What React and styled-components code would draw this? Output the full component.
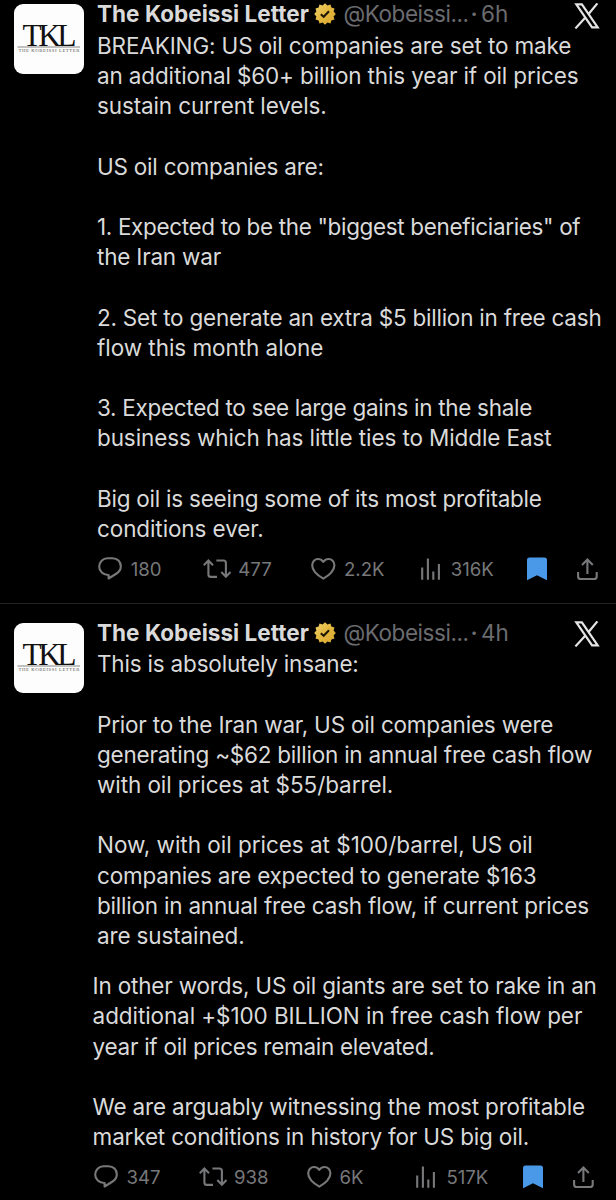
import React from 'react';
import styled, { createGlobalStyle } from 'styled-components';

const GlobalStyle = createGlobalStyle`
  * {
    box-sizing: border-box;
  }

  body {
    margin: 0;
    background: #000;
    overflow: hidden;
  }
`;

const Feed = styled.main`
  width: 616px;
  height: 1200px;
  overflow: hidden;
  background: #000;
  color: #dadada;
  font-family: Inter, 'Liberation Sans', sans-serif;
`;

const Post = styled.article`
  display: flex;
  height: ${({ $height }) => $height}px;
  padding-top: ${({ $top }) => $top}px;
  border-top: ${({ $divided }) => ($divided ? '1px solid #242424' : 'none')};
`;

const AvatarColumn = styled.div`
  flex: 0 0 97px;
  padding: 4px 0 0 14px;
`;

const Avatar = styled.div`
  width: 70px;
  height: 70px;
  border-radius: 9px;
  background: #fdfdfd;
  overflow: hidden;

  svg {
    display: block;
  }
`;

const Content = styled.div`
  flex: 1;
  min-width: 0;
`;

const Header = styled.header`
  display: flex;
  align-items: flex-start;
  height: 30.8px;
  line-height: 28px;
  font-size: 22.5px;
  white-space: nowrap;
`;

const Name = styled.span`
  flex: none;
  width: 217px;
  font-weight: 700;
  letter-spacing: 0.03px;
`;

const Handle = styled.span`
  flex: none;
  width: 134.5px;
  padding-left: 7.5px;
  color: #6b6c6f;
  letter-spacing: -0.45px;
`;

const Dot = styled.span`
  flex: none;
  width: 10.5px;
  color: #6b6c6f;
  font-weight: 600;
`;

const Time = styled.span`
  flex: none;
  width: 92.5px;
  color: #6b6c6f;
`;

const BadgeIcon = styled.svg`
  flex: none;
  width: 22px;
  height: 22px;
  margin-top: 3px;
`;

const LogoIcon = styled.svg`
  flex: none;
  width: 26px;
  height: 26px;
  margin-top: 2.5px;
`;

const Body = styled.div`
  display: flex;
  flex-direction: column;
  gap: 30.2px;
  font-size: 22.5px;
  line-height: 30.2px;
`;

const Continuation = styled.div`
  margin-left: -4.4px;
  padding-top: ${({ $gap = 0 }) => $gap}px;
`;

const Paragraph = styled.p`
  margin: 0;
`;

const Line = styled.span`
  display: block;
  white-space: pre;
  letter-spacing: ${({ $tracking }) => $tracking}px;
`;

const Actions = styled.footer`
  display: grid;
  grid-template-columns: 105px 108.2px 109.3px 106.4px 50.3px 22px;
  align-items: center;
  height: 24px;
  margin: 12.6px 0 0 1.3px;
`;

const Action = styled.div`
  display: flex;
  align-items: center;
  gap: ${({ $gap = 0 }) => $gap}px;
  color: #77787a;
  font-size: 18.6px;
  line-height: 24px;

  svg {
    flex: none;
    fill: none;
    stroke: currentColor;
    stroke-width: 2.1;
  }
`;

function Logo() {
  return (
    <svg width="70" height="70" viewBox="0 0 70 70">
      <g fill="#111" fontFamily="'Liberation Serif', serif">
        <text x="8.6" y="41.6" fontSize="31.5" textLength="54" lengthAdjust="spacing">TKL</text>
        <text x="4.5" y="48.3" fontSize="4.8" fill="#555" textLength="61" lengthAdjust="spacing">
          THE KOBEISSI LETTER
        </text>
      </g>
      <path d="M3.5 43H66" stroke="#777" strokeWidth="0.9" />
    </svg>
  );
}

function Badge() {
  return (
    <BadgeIcon viewBox="0 0 22 22">
      <defs>
        <linearGradient id="gold" x1="0" y1="0" x2="1" y2="1">
          <stop offset="0" stopColor="#efd36b" />
          <stop offset="0.5" stopColor="#e3b73f" />
          <stop offset="1" stopColor="#d9a52c" />
        </linearGradient>
      </defs>
      <path
        fill="url(#gold)"
        d="M11 .2 13.4 2.4 16.5 1.5 17.4 4.6 20.5 5.5 19.6 8.6 21.8 11 19.6 13.4 20.5 16.5 17.4 17.4 16.5 20.5 13.4 19.6 11 21.8 8.6 19.6 5.5 20.5 4.6 17.4 1.5 16.5 2.4 13.4 .2 11 2.4 8.6 1.5 5.5 4.6 4.6 5.5 1.5 8.6 2.4z"
      />
      <path d="M6.8 11.2 9.7 13.8 15 8.2" fill="none" stroke="#1c1604" strokeWidth="2" />
    </BadgeIcon>
  );
}

function XLogo() {
  return (
    <LogoIcon viewBox="0 0 26 26" fill="none" stroke="#e4e4e4" strokeWidth="2.2">
      <path d="M2.3 1.3h5.6L23.7 24.4h-5.6zM23.4.4 14.6 11M11.4 14.6 1.4 25.4" />
    </LogoIcon>
  );
}

function ReplyIcon() {
  return (
    <svg width="24" height="24" viewBox="0 0 24 24" strokeLinejoin="round">
      <path d="M9.5 1.2h5c5 0 8.3 3.6 8.3 8.1 0 3-1.6 5.6-4.2 7.2l-8 5V18C5 18.3 1.2 14 1.2 9.7 1.2 5 4.8 1.2 9.5 1.2z" />
    </svg>
  );
}

function RepostIcon() {
  return (
    <svg width="28" height="20" viewBox="0 0 28 20">
      <path d="M.8 6.2 5.4 1.6 10 6.2M5.4 2.2v13.2a2.5 2.5 0 0 0 2.5 2.5H14M13.4 1.5h7A2.5 2.5 0 0 1 22.9 4v13.4M18.3 13.1l4.6 4.6 4.6-4.6" />
    </svg>
  );
}

function LikeIcon() {
  return (
    <svg width="25" height="24" viewBox="0 0 25 24" strokeLinejoin="round">
      <path d="M12.3 4.9C10.7 2.8 9 2 7.1 2 3.9 2 1.2 4.6 1.2 8.3c0 5.6 5.3 10 11.1 13.4 5.8-3.4 11.1-7.8 11.1-13.4C23.4 4.6 20.7 2 17.5 2c-1.9 0-3.6.8-5.2 2.9z" />
    </svg>
  );
}

function ViewsIcon() {
  return (
    <svg width="20" height="24" viewBox="0 0 20 24">
      <path d="M1.2 10.4v12.3M6.9 1.4v21.3M12.3 14.4v8.3M17.9 7v15.7" />
    </svg>
  );
}

function BookmarkIcon() {
  return (
    <svg width="21" height="24" viewBox="0 0 21 24">
      <path
        d="M2.5 .5h15A2.5 2.5 0 0 1 20 3v20.2l-10-5-10 5V3A2.5 2.5 0 0 1 2.5.5z"
        fill="#4a99e9"
        stroke="none"
      />
    </svg>
  );
}

function ShareIcon() {
  return (
    <svg width="22" height="24" viewBox="0 0 22 24">
      <path d="M1.1 15v4.6A2.5 2.5 0 0 0 3.6 22h13.6a2.5 2.5 0 0 0 2.5-2.4V15M10.4 17V2.6M5 8l5.4-5.4L15.8 8" />
    </svg>
  );
}

// Each line is [text, letter spacing in px]
const firstPost = [
  [
    ['BREAKING: US oil companies are set to make', -0.14],
    ['an additional $60+ billion this year if oil prices', -0.14],
    ['sustain current levels.', -0.13],
  ],
  [['US oil companies are:', -0.22]],
  [
    ['1. Expected to be the "biggest beneficiaries" of', -0.35],
    ['the Iran war', -0.2],
  ],
  [
    ['2. Set to generate an extra $5 billion in free cash', -0.23],
    ['flow this month alone', -0.05],
  ],
  [
    ['3. Expected to see large gains in the shale', -0.3],
    ['business which has little ties to Middle East', -0.11],
  ],
  [
    ['Big oil is seeing some of its most profitable', -0.24],
    ['conditions ever.', -0.1],
  ],
];

const secondPost = [
  [['This is absolutely insane:', -0.19]],
  [
    ['Prior to the Iran war, US oil companies were', -0.2],
    ['generating ~$62 billion in annual free cash flow', -0.23],
    ['with oil prices at $55/barrel.', -0.08],
  ],
  [
    ['Now, with oil prices at $100/barrel, US oil', -0.02],
    ['companies are expected to generate $163', -0.2],
    ['billion in annual free cash flow, if current prices', -0.21],
    ['are sustained.', -0.14],
  ],
];

const secondPostRest = [
  [
    ['In other words, US oil giants are set to rake in an', -0.19],
    ['additional +$100 BILLION in free cash flow per', -0.09],
    ['year if oil prices remain elevated.', -0.28],
  ],
  [
    ['We are arguably witnessing the most profitable', -0.17],
    ['market conditions in history for US big oil.', -0.18],
  ],
];

function PostText({ paragraphs }) {
  return (
    <Body>
      {paragraphs.map((lines, index) => (
        <Paragraph key={index}>
          {lines.map(([text, tracking]) => (
            <Line key={text} $tracking={tracking}>{text}</Line>
          ))}
        </Paragraph>
      ))}
    </Body>
  );
}

function PostHeader({ time }) {
  return (
    <Header>
      <Name>The Kobeissi Letter</Name>
      <Badge />
      <Handle>@Kobeissi...</Handle>
      <Dot>·</Dot>
      <Time>{time}</Time>
      <XLogo />
    </Header>
  );
}

function PostActions({ replies, reposts, likes, views }) {
  return (
    <Actions>
      <Action $gap={8.5}><ReplyIcon />{replies}</Action>
      <Action $gap={7}><RepostIcon />{reposts}</Action>
      <Action $gap={7.5}><LikeIcon />{likes}</Action>
      <Action $gap={10}><ViewsIcon />{views}</Action>
      <Action><BookmarkIcon /></Action>
      <Action><ShareIcon /></Action>
    </Actions>
  );
}

function App() {
  return (
    <>
      <GlobalStyle />
      <Feed>
        <Post $height={603} $top={0}>
          <AvatarColumn>
            <Avatar><Logo /></Avatar>
          </AvatarColumn>
          <Content>
            <PostHeader time="6h" />
            <PostText paragraphs={firstPost} />
            <PostActions replies="180" reposts="477" likes="2.2K" views="316K" />
          </Content>
        </Post>
        <Post $height={597} $top={14.5} $divided>
          <AvatarColumn>
            <Avatar><Logo /></Avatar>
          </AvatarColumn>
          <Content>
            <PostHeader time="4h" />
            <PostText paragraphs={secondPost} />
            <Continuation $gap={19.8}>
              <PostText paragraphs={secondPostRest} />
              <PostActions replies="347" reposts="938" likes="6K" views="517K" />
            </Continuation>
          </Content>
        </Post>
      </Feed>
    </>
  );
}

export default App;
